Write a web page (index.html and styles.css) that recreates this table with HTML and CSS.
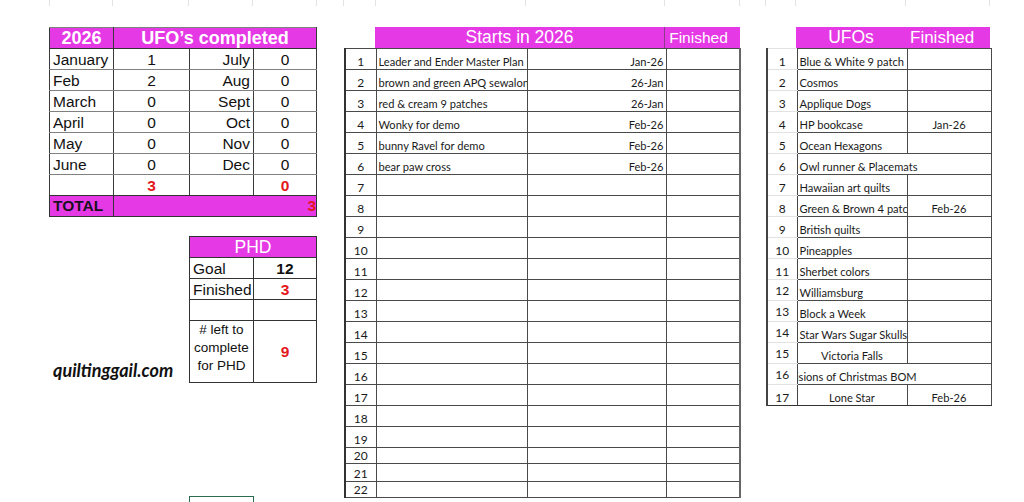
FILE: index.html
```html
<!DOCTYPE html>
<html lang="en">
<head>
<meta charset="utf-8">
<title>UFOs 2026</title>
<link rel="stylesheet" href="styles.css">
</head>
<body>
<div class="strip"><span></span><span></span><span></span><span></span><span></span><span></span><span></span><span></span><span></span><span></span><span></span><span></span><span></span><span></span><span></span></div>
<div class="sheet">
  <section class="left">
    <table class="done">
      <colgroup><col class="c64"><col class="c76"><col class="c64"><col class="c63"></colgroup>
      <tr class="mag"><td class="b ctr wht">2026</td><td colspan="3" class="b ctr wht">UFO’s completed</td></tr>
      <tr><td>January</td><td class="ctr">1</td><td class="rt">July</td><td class="ctr">0</td></tr>
      <tr><td>Feb</td><td class="ctr">2</td><td class="rt">Aug</td><td class="ctr">0</td></tr>
      <tr><td>March</td><td class="ctr">0</td><td class="rt">Sept</td><td class="ctr">0</td></tr>
      <tr><td>April</td><td class="ctr">0</td><td class="rt">Oct</td><td class="ctr">0</td></tr>
      <tr><td>May</td><td class="ctr">0</td><td class="rt">Nov</td><td class="ctr">0</td></tr>
      <tr><td>June</td><td class="ctr">0</td><td class="rt">Dec</td><td class="ctr">0</td></tr>
      <tr class="sum"><td></td><td class="ctr b red">3</td><td></td><td class="ctr b red">0</td></tr>
      <tr class="mag tot"><td class="b">TOTAL</td><td colspan="3" class="rt b red">3</td></tr>
    </table>
    <div class="phd-row">
      <p class="brand">quiltinggail.com</p>
      <table class="phd">
        <colgroup><col class="c64"><col class="c63"></colgroup>
        <tr class="mag"><td colspan="2" class="ctr wht hd">PHD</td></tr>
        <tr><td>Goal</td><td class="ctr b">12</td></tr>
        <tr><td>Finished</td><td class="ctr b red">3</td></tr>
        <tr><td></td><td></td></tr>
        <tr class="tall"><td class="ctr mid small"># left to<br>complete<br>for PHD</td><td class="ctr mid b red">9</td></tr>
      </table>
    </div>
    <div class="selcell"></div>
  </section>

  <section class="starts">
    <div class="hdr">
      <div class="hdr-gap"></div>
      <div class="hdr-main">Starts in 2026</div>
      <div class="hdr-fin">Finished</div>
    </div>
    <table class="list">
      <colgroup><col class="c31"><col class="c151"><col class="c139"><col class="c74"></colgroup>
      <tr><td class="n">1</td><td>Leader and Ender Master Plan</td><td class="rt">Jan-26</td><td></td></tr>
      <tr><td class="n">2</td><td>brown and green APQ sewalong</td><td class="rt">26-Jan</td><td></td></tr>
      <tr><td class="n">3</td><td>red &amp; cream 9 patches</td><td class="rt">26-Jan</td><td></td></tr>
      <tr><td class="n">4</td><td>Wonky for demo</td><td class="rt">Feb-26</td><td></td></tr>
      <tr><td class="n">5</td><td>bunny Ravel for demo</td><td class="rt">Feb-26</td><td></td></tr>
      <tr><td class="n">6</td><td>bear paw cross</td><td class="rt">Feb-26</td><td></td></tr>
      <tr><td class="n">7</td><td></td><td></td><td></td></tr>
      <tr><td class="n">8</td><td></td><td></td><td></td></tr>
      <tr><td class="n">9</td><td></td><td></td><td></td></tr>
      <tr><td class="n">10</td><td></td><td></td><td></td></tr>
      <tr><td class="n">11</td><td></td><td></td><td></td></tr>
      <tr><td class="n">12</td><td></td><td></td><td></td></tr>
      <tr><td class="n">13</td><td></td><td></td><td></td></tr>
      <tr><td class="n">14</td><td></td><td></td><td></td></tr>
      <tr><td class="n">15</td><td></td><td></td><td></td></tr>
      <tr><td class="n">16</td><td></td><td></td><td></td></tr>
      <tr><td class="n">17</td><td></td><td></td><td></td></tr>
      <tr><td class="n">18</td><td></td><td></td><td></td></tr>
      <tr><td class="n">19</td><td></td><td></td><td></td></tr>
      <tr class="h15"><td class="n">20</td><td></td><td></td><td></td></tr>
      <tr class="h18"><td class="n">21</td><td></td><td></td><td></td></tr>
      <tr class="h16"><td class="n">22</td><td></td><td></td><td></td></tr>
    </table>
  </section>

  <section class="ufos">
    <div class="hdr">
      <div class="uhdr-gap"></div>
      <div class="uhdr-main">UFOs</div>
      <div class="uhdr-fin">Finished</div>
    </div>
    <table class="list ulist">
      <colgroup><col class="c30"><col class="c110"><col class="c84"></colgroup>
      <tr><td class="n">1</td><td>Blue &amp; White 9 patch</td><td></td></tr>
      <tr><td class="n">2</td><td>Cosmos</td><td></td></tr>
      <tr><td class="n">3</td><td>Applique Dogs</td><td></td></tr>
      <tr><td class="n">4</td><td>HP bookcase</td><td class="ctr">Jan-26</td></tr>
      <tr><td class="n">5</td><td>Ocean Hexagons</td><td></td></tr>
      <tr><td class="n">6</td><td colspan="2">Owl runner &amp; Placemats</td></tr>
      <tr><td class="n">7</td><td>Hawaiian art quilts</td><td></td></tr>
      <tr><td class="n">8</td><td>Green &amp; Brown 4 patch</td><td class="ctr">Feb-26</td></tr>
      <tr><td class="n">9</td><td>British quilts</td><td></td></tr>
      <tr><td class="n">10</td><td>Pineapples</td><td></td></tr>
      <tr><td class="n">11</td><td>Sherbet colors</td><td></td></tr>
      <tr><td class="n mid">12</td><td>Williamsburg</td><td></td></tr>
      <tr><td class="n mid">13</td><td>Block a Week</td><td></td></tr>
      <tr><td class="n mid">14</td><td>Star Wars Sugar Skulls</td><td></td></tr>
      <tr><td class="n mid">15</td><td class="ctr">Victoria Falls</td><td></td></tr>
      <tr><td class="n mid">16</td><td colspan="2" class="clip"><div class="spill"><span>Visions of Christmas BOM</span></div></td></tr>
      <tr class="last"><td class="n">17</td><td class="ctr">Lone Star</td><td class="ctr">Feb-26</td></tr>
    </table>
  </section>
</div>
</body>
</html>
```

FILE: styles.css
```css
html, body {
  margin: 0;
  padding: 0;
  background: #fff;
  overflow: hidden;
}
body {
  width: 1024px;
  height: 502px;
  font-family: "Liberation Sans", Arial, sans-serif;
  color: #111;
}

/* faint spreadsheet gridlines at the top edge */
.strip {
  display: grid;
  grid-template-columns: 50px 63px 76px 64px 64px 27px 32px 150px 139px 75px 26px 30px 110px 84px 1fr;
  height: 6px;
}
.strip span { border-right: 1px solid #e4e4e4; }
.strip span:last-child { border-right: 0; }

.sheet {
  display: flex;
  align-items: flex-start;
  padding-top: 21px;
}

table {
  border-collapse: collapse;
  table-layout: fixed;
}
td {
  padding: 0 3px;
  white-space: nowrap;
  overflow: hidden;
  vertical-align: bottom;
}

.c30 { width: 30px; }
.c31 { width: 31px; }
.c63 { width: 63px; }
.c64 { width: 64px; }
.c74 { width: 74px; }
.c76 { width: 76px; }
.c84 { width: 84px; }
.c110 { width: 110px; }
.c139 { width: 139px; }
.c151 { width: 151px; }

.ctr { text-align: center; }
.rt { text-align: right; }
.b { font-weight: 700; }
.red { color: #e3171d; }
.wht { color: #fff; }
.mid { vertical-align: middle; }
.mag td { background: #e639e6; }

/* left column */
.left {
  margin-left: 49px;
  width: 268px;
}
.done {
  width: 268px;
  border: 1px solid #222;
}
.done tr { height: 21px; }
.done td {
  border: 1px solid #3a3a3a;
  border-top-color: #808080;
  border-bottom-color: #808080;
  font-size: 15.5px;
  line-height: 18px;
}
.done .mag td {
  font-size: 18px;
  line-height: 20px;
  border-bottom-color: #333;
}
.done .sum td { border-bottom-color: #333; }
.done .tot td {
  font-size: 15.5px;
  color: #1a1020;
  border-color: #333;
}
.done .tot td.red { color: #e3171d; padding-right: 0; }

.phd-row {
  display: flex;
  align-items: flex-end;
  margin-top: 19px;
}
.brand {
  margin: 0;
  width: 136px;
  padding: 0 0 3px 4px;
  font-family: Lato, "Open Sans", sans-serif;
  font-style: italic;
  font-weight: 700;
  font-size: 18px;
  line-height: 20px;
  color: #111;
}
.phd {
  width: 128px;
  border: 1px solid #222;
}
.phd tr { height: 21px; }
.phd td {
  border: 1px solid #333;
  font-size: 15.5px;
  line-height: 18px;
}
.phd .hd {
  font-size: 17.5px;
  line-height: 20px;
}
.phd tr.tall { height: 62px; }
.phd .small {
  font-size: 13.5px;
  line-height: 18px;
  white-space: normal;
  padding-bottom: 7px;
}

.selcell {
  margin: 113px 0 0 140px;
  width: 63px;
  height: 6px;
  border: 1.5px solid #2c6b4f;
  border-bottom: 0;
}

/* headers of the two list tables */
.hdr {
  display: flex;
  height: 21px;
  color: #fff;
}
.hdr-gap { width: 31px; }
.hdr-main {
  width: 290px;
  background: #e639e6;
  border-right: 1px solid #8d3a8d;
  text-align: center;
  font-size: 17.5px;
  line-height: 21px;
}
.hdr-fin {
  width: 71px;
  padding-left: 4px;
  background: #e639e6;
  font-size: 15.5px;
  line-height: 22px;
}
.uhdr-gap { width: 30px; }
.uhdr-main {
  width: 110px;
  background: #e639e6;
  text-align: center;
  font-size: 17.5px;
  line-height: 21px;
}
.uhdr-fin {
  width: 80px;
  padding-left: 4px;
  background: #e639e6;
  font-size: 17px;
  line-height: 21px;
}

/* list tables */
.starts {
  margin-left: 27px;
  width: 396px;
}
.list {
  width: 396px;
  border: 1px solid #222;
  border-left: 2px solid #333;
  border-right: 2px solid #666;
}
.list tr { height: 21px; }
.list tr.h15 { height: 15px; }
.list tr.h18 { height: 18px; }
.list tr.h16 { height: 16px; }
.list td {
  border: 1px solid #4a4a4a;
  font-family: Lato, "Open Sans", sans-serif;
  font-size: 11.1px;
  line-height: 15px;
  color: #1a1a1a;
  padding: 0 2px 0 2px;
}
.list td.n { text-align: center; padding: 0; font-size: 12px; }

.ufos {
  margin-left: 26px;
  width: 224px;
}
.ulist {
  width: 224px;
  border: 1px solid #333;
  border-left: 2px solid #444;
  border-right: 1px solid #555;
}
.ulist td.n {
  border-top-color: #e2e2e2;
  border-bottom-color: #e2e2e2;
  border-right-color: #444;
}
.ulist tr.last td { border-bottom-color: #333; }
.ulist td.clip { padding: 0; }
.spill {
  width: 110px;
  display: flex;
  justify-content: center;
}
.spill span { flex: none; }
```
